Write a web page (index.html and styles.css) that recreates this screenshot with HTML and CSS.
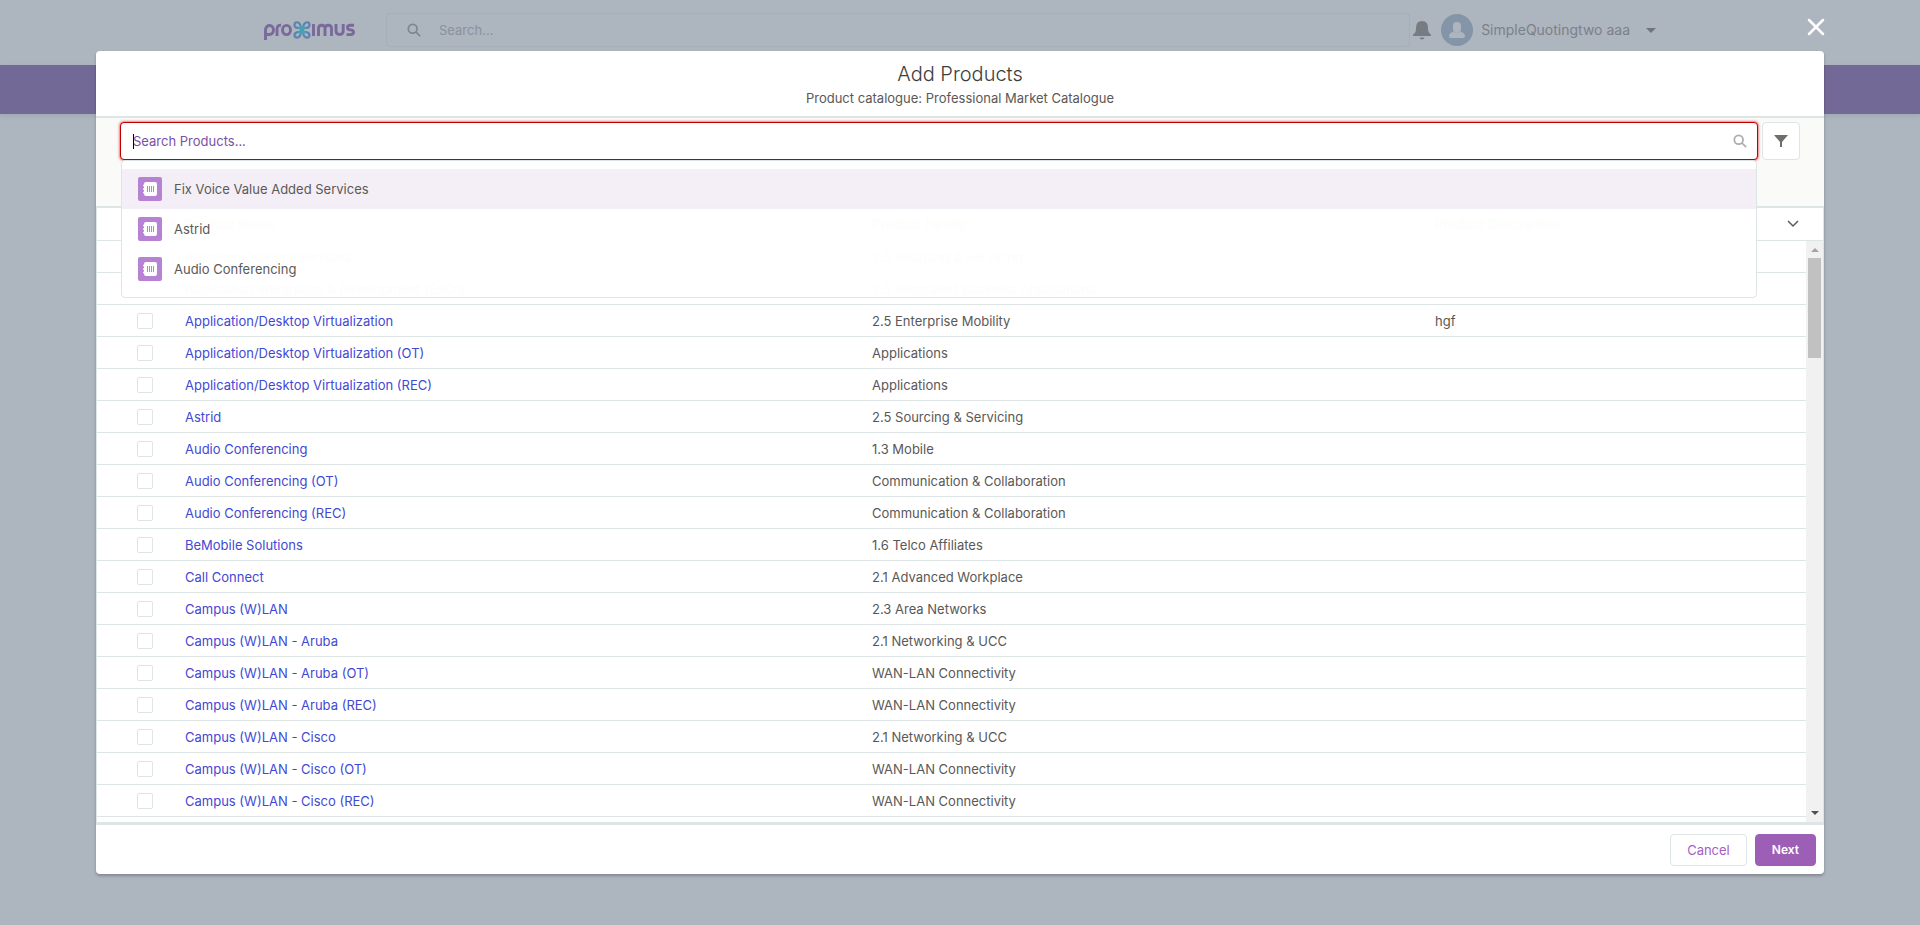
FILE: index.html
```html
<!DOCTYPE html>
<html lang="en">
<head>
<meta charset="utf-8">
<title>Add Products</title>
<link rel="stylesheet" href="styles.css">
</head>
<body>
<header class="topbar">
  <svg class="logo" viewBox="0 0 92 24" role="img" aria-label="proximus">
    <g fill="none" stroke="#7a6a9c" stroke-width="2.900">
      <path d="M1.500 21V10.500a4 4.500 0 1 1 4 5H3"/>
      <path d="M13 17V10q0-4 4-3.800"/>
      <ellipse cx="22.500" cy="11" rx="4" ry="4.600"/>
      <path d="M49.500 5V17M54.500 17V9.500q0-3.200 3.300-3.200T61 9.500V17M61 9.500q0-3.200 3.300-3.200T67.500 9.500V17M72 5v6.500q0 4 3.600 4t3.600-4V5"/>
      <path d="M90 6.300H86.500q-3 0-3 2.200t3 2.400 3 2.400-3 2.300H82.500"/>
    </g>
    <g fill="none" stroke-width="2.200">
      <path stroke="#5d84ae" d="M36 9H34Q30 8.500 30.500 5.500T34 3.500Q37 4.500 37 11T34 18.500Q31 19 30.500 16.500T34 13H36M40 9H42Q46 8.500 45.500 5.500T42 3.500Q39 4.500 39 11T42 18.500Q45 19 45.500 16.500T42 13H40"/>
      <path stroke="#45a0b8" d="M34.500 9H41.500M34.500 13H41.500M36.800 7V15M39.200 7V15"/>
    </g>
  </svg>
  <label class="global-search">
    <svg class="icon" viewBox="0 0 16 16" aria-hidden="true"><circle cx="6.500" cy="6.500" r="5"/><path d="M10 10l5 5"/></svg>
    <input type="search" placeholder="Search..." aria-label="Search">
  </label>
  <button class="bell" aria-label="Notifications"><svg viewBox="0 0 18 20"><path d="M9 1q6 0 6 7c0 4 1 5 3 6.500V16H0v-1.500C2 13 3 12 3 8q0-7 6-7zM6.500 17.500h5q-.5 2-2.500 2t-2.500-2z"/></svg></button>
  <button class="user"><svg viewBox="0 0 32 32" class="avatar" aria-hidden="true"><circle cx="16" cy="16" r="16" fill="#8395a7"/><rect x="12" y="8" width="8" height="11" rx="4" fill="#adb5bf"/><path fill="#adb5bf" d="M8 22q0-3 4.500-4.300 3.500 2.600 7 0Q24 19 24 22q0 2-1.500 2h-13Q8 24 8 22z"/></svg><span>SimpleQuotingtwo aaa</span><svg class="caret" viewBox="0 0 10 5" aria-hidden="true"><path d="M0 0h10L5 5z"/></svg></button>
</header>
<nav class="band"></nav>

<div class="overlay">
<section class="modal" role="dialog" aria-labelledby="title">
  <button class="close" aria-label="Close"><svg viewBox="0 0 18 18"><path d="M2 2l14 14M16 2L2 16"/></svg></button>
  <div class="modal-head">
    <h1 id="title">Add Products</h1>
    <p>Product catalogue: Professional Market Catalogue</p>
  </div>
  <div class="toolbar">
    <div class="search">
      <input type="text" placeholder="Search Products..." aria-label="Search Products">
      <span class="cursor"></span>
      <svg class="icon search-icon" viewBox="0 0 16 16" aria-hidden="true"><circle cx="6.500" cy="6.500" r="5"/><path d="M10 10l5 5"/></svg>
      <ul class="menu">
        <li class="active"><svg viewBox="0 0 24 24" aria-hidden="true"><use href="#product"/></svg>Fix Voice Value Added Services</li>
        <li><svg viewBox="0 0 24 24" aria-hidden="true"><use href="#product"/></svg>Astrid</li>
        <li><svg viewBox="0 0 24 24" aria-hidden="true"><use href="#product"/></svg>Audio Conferencing</li>
      </ul>
    </div>
    <button class="filter" aria-label="Filter"><svg viewBox="0 0 14 12"><path d="M0 0h14L8 7v5H6V7z"/></svg></button>
  </div>
  <div class="grid">
    <div class="grid-head">
      <span></span><span>Product Name</span><span>Product Family</span><span>Product Description</span>
      <button class="expand" aria-label="Columns"><svg viewBox="0 0 12 8"><path d="M1 1l5 5 5-5"/></svg></button>
    </div>
    <div class="grid-body">
      <table>
        <colgroup><col class="c-check"><col class="c-name"><col class="c-family"><col></colgroup>
        <tbody id="rows"></tbody>
      </table>
      <div class="scrollbar" aria-hidden="true"><svg viewBox="0 0 8 4"><path fill="#a3a3a3" d="M4 0l4 4H0z"/></svg><span class="thumb"></span><svg viewBox="0 0 8 4"><path fill="#505050" d="M0 0h8L4 4z"/></svg></div>
    </div>
  </div>
  <footer class="modal-foot"><button class="btn">Cancel</button><button class="btn primary">Next</button></footer>
</section>
</div>

<svg class="defs" aria-hidden="true"><symbol id="product" viewBox="0 0 24 24"><rect width="24" height="24" rx="2" fill="#b781d3"/><rect x="6" y="5" width="13" height="14" rx="2" fill="#fff"/><path stroke="#fff" stroke-width="1.500" d="M5 8.500h2M5 12h2M5 15.500h2"/><path stroke="#b781d3" d="M9.500 9v6M11.500 9v6M13.500 9v6M15.500 9v6"/></symbol></svg>
<script src="rows.js"></script>
</body>
</html>
```
FILE: styles.css
```css
* { box-sizing: border-box; }
body {
  margin: 0;
  height: 100vh;
  overflow: hidden;
  background: #adb5bf;
  color: #5a5856;
  font: 13px/20px Inter, "Noto Sans", sans-serif;
}
button { border: 0; padding: 0; background: none; font: inherit; color: inherit; display: flex; align-items: center; justify-content: center; }
input { font: inherit; color: inherit; }
h1, p, ul { margin: 0; padding: 0; }
svg { display: block; }
.defs { width: 0; height: 0; position: absolute; }

.topbar { height: 65px; padding: 0 264px; display: flex; align-items: flex-start; }
.logo { width: 92px; height: 24px; margin: 19px 30px 0 0; flex: none; }
.global-search {
  flex: 1;
  height: 34px;
  margin-top: 13px;
  border: 1px solid #a5aeb9;
  border-radius: 4px;
  display: flex;
  align-items: center;
  padding-left: 20px;
  gap: 16px;
}
.global-search input { flex: 1; border: 0; background: none; outline: 0; padding: 0 2px; }
.global-search input::placeholder { color: #8a929b; }
.icon { width: 14px; height: 14px; fill: none; stroke: #80868e; stroke-width: 2; flex: none; }
.bell { margin: 20px 10px 0 3px; }
.bell svg { width: 18px; height: 20px; fill: #777c83; }
.user { margin-top: 14px; color: #7c8187; gap: 8px; font-size: 14px; }
.avatar { width: 32px; height: 32px; }
.caret { width: 10px; height: 5px; fill: #70757b; margin-left: 8px; }
.band { height: 49px; background: #736996; box-shadow: 0 2px 4px #a0a8b1; }

.overlay { position: absolute; inset: 0; padding: 51px 5%; }
.modal { position: relative; height: 100%; display: flex; flex-direction: column; background: #fff; border-radius: 4px; box-shadow: 0 2px 3px rgba(0, 0, 0, .25); }
.close { position: absolute; right: -1px; top: -33px; }
.close svg { width: 18px; height: 18px; fill: none; stroke: #fff; stroke-width: 2.500; stroke-linecap: round; }
.modal-head { height: 67px; flex: none; padding-top: 11px; text-align: center; border-bottom: 2px solid #dde5e7; }
.modal-head h1 { font-size: 20px; line-height: 24px; font-weight: 300; color: #3e3e3c; }
.modal-head p { line-height: 24px; }
.toolbar { height: 90px; flex: none; display: flex; gap: 4px; padding: 4px 24px; background: #fafaf9; border-bottom: 2px solid #dde5e7; }
.search { position: relative; flex: 1; height: 38px; }
.search input { width: 100%; height: 38px; border: 1px solid #c00000; border-radius: 4px; padding: 0 12px; background: #fff; box-shadow: 0 0 3px #d00000; outline: 0; }
.search input::placeholder { color: #7b4fa6; }
.cursor { position: absolute; left: 13px; top: 12px; width: 1px; height: 15px; background: #000; }
.search-icon { position: absolute; right: 11px; top: 12px; stroke: #adadb0; }
.menu { position: absolute; z-index: 1; left: 1px; right: 1px; top: 38px; padding: 8px 0; border: 1px solid #dde5e7; border-radius: 4px; background: #fff; opacity: .99; list-style: none; }
.menu li { height: 40px; padding-left: 16px; display: flex; align-items: center; gap: 12px; }
.menu svg { width: 24px; height: 24px; }
.active { background: #f4eff7; }
.filter { width: 38px; height: 38px; border: 1px solid #dde5e7; border-radius: 4px; background: #fff; }
.filter svg { width: 14px; height: 12px; fill: #706e6b; }

.grid { flex: 1; min-height: 0; display: flex; flex-direction: column; border: solid #dde5e7; border-width: 0 1px; }
.grid-head { flex: none; height: 33px; display: grid; grid-template-columns: 88px 687px 563px 1fr 36px; align-items: center; border-bottom: 1px solid #dde5e7; font-weight: 600; }
.expand svg { width: 12px; height: 8px; fill: none; stroke: #5c5a58; stroke-width: 1.500; margin-right: 24px; }
.grid-body { flex: 1; min-height: 0; display: flex; overflow: hidden; }
table { flex: 1; width: 100%; border-collapse: separate; border-spacing: 0; table-layout: fixed; height: 0; }
.c-check { width: 88px; }
.c-name { width: 687px; }
.c-family { width: 563px; }
td { height: 32px; padding: 0; border-bottom: 1px solid #dde5e7; white-space: nowrap; }
td input { display: block; appearance: none; width: 16px; height: 16px; margin: 0 0 0 40px; border: 1px solid #dde5e7; border-radius: 2px; background: #fff; }
td a { color: #3f49d4; text-decoration: none; }
.scrollbar { width: 17px; flex: none; background: #f1f1f1; display: flex; flex-direction: column; align-items: center; padding: 7px 0; }
.scrollbar svg { width: 8px; height: 4px; flex: none; }
.thumb { width: 13px; height: 100px; margin: 6px 0 auto; background: #c1c1c1; }

.modal-foot { flex: none; height: 52px; border-top: 3px solid #dde5e7; padding-right: 8px; display: flex; align-items: center; justify-content: flex-end; gap: 8px; }
.btn { height: 32px; padding: 0 16px; border: 1px solid #dde5e7; border-radius: 4px; color: #a55fbf; }
.primary { background: #9d5eb5; border-color: #9d5eb5; color: #fff; font-size: 12px; font-weight: 600; }
```
FILE: rows.js
```js
const products = [
  ["Adoption Training Services", "2.5 Sourcing & Servicing", ""],
  ["Application Integration & Development (EnCo)", "2.5 Integrated Business Applications", ""],
  ["Application/Desktop Virtualization", "2.5 Enterprise Mobility", "hgf"],
  ["Application/Desktop Virtualization (OT)", "Applications", ""],
  ["Application/Desktop Virtualization (REC)", "Applications", ""],
  ["Astrid", "2.5 Sourcing & Servicing", ""],
  ["Audio Conferencing", "1.3 Mobile", ""],
  ["Audio Conferencing (OT)", "Communication & Collaboration", ""],
  ["Audio Conferencing (REC)", "Communication & Collaboration", ""],
  ["BeMobile Solutions", "1.6 Telco Affiliates", ""],
  ["Call Connect", "2.1 Advanced Workplace", ""],
  ["Campus (W)LAN", "2.3 Area Networks", ""],
  ["Campus (W)LAN - Aruba", "2.1 Networking & UCC", ""],
  ["Campus (W)LAN - Aruba (OT)", "WAN-LAN Connectivity", ""],
  ["Campus (W)LAN - Aruba (REC)", "WAN-LAN Connectivity", ""],
  ["Campus (W)LAN - Cisco", "2.1 Networking & UCC", ""],
  ["Campus (W)LAN - Cisco (OT)", "WAN-LAN Connectivity", ""],
  ["Campus (W)LAN - Cisco (REC)", "WAN-LAN Connectivity", ""]
];
const body = document.getElementById("rows");
for (const [name, family, description] of products) {
  const row = body.insertRow();
  const box = document.createElement("input");
  box.type = "checkbox";
  box.setAttribute("aria-label", name);
  row.insertCell().append(box);
  const link = document.createElement("a");
  link.href = "#";
  link.textContent = name;
  row.insertCell().append(link);
  row.insertCell().textContent = family;
  row.insertCell().textContent = description;
}
```
